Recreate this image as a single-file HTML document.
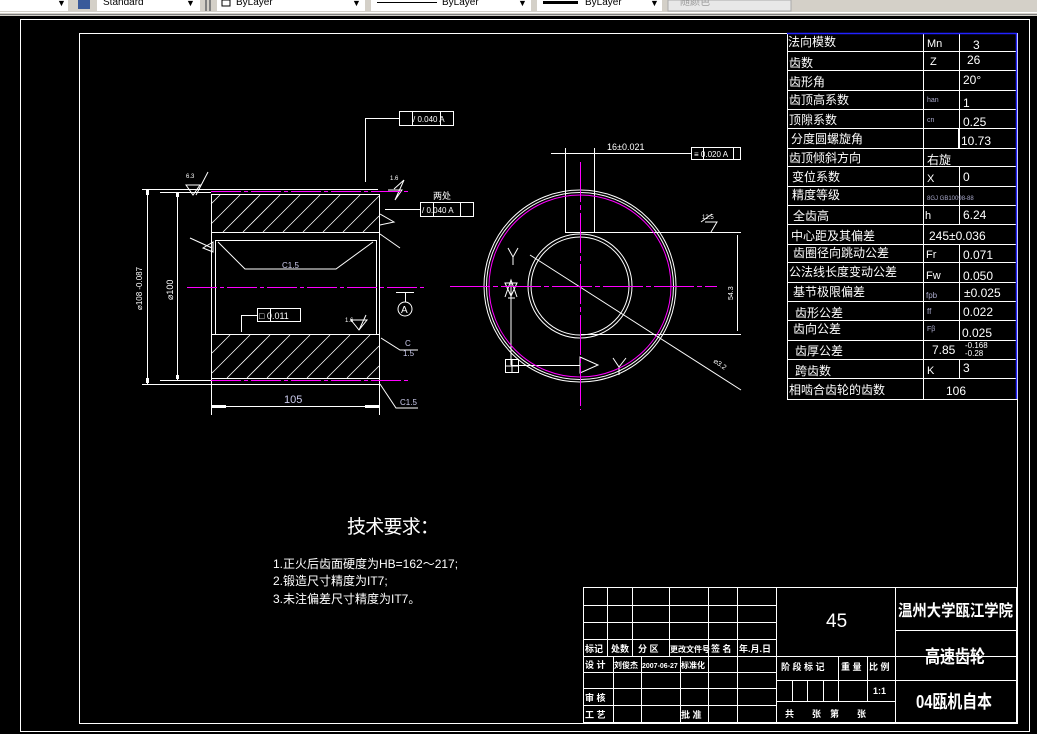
<!DOCTYPE html>
<html><head><meta charset="utf-8">
<style>
html,body{margin:0;padding:0;background:#000;width:1037px;height:734px;overflow:hidden}
svg{display:block}
text{font-family:"Liberation Sans","Noto Sans CJK SC","WenQuanYi Zen Hei",sans-serif;fill:#fff}
.s{font-family:"Noto Sans CJK SC","WenQuanYi Zen Hei",sans-serif}
</style></head><body>
<svg width="1037" height="734" viewBox="0 0 1037 734" xmlns="http://www.w3.org/2000/svg">
<rect width="1037" height="734" fill="#000"/>
<!-- toolbar -->
<rect x="0" y="0" width="1037" height="16" fill="#d4d0c8"/>
<rect x="0" y="12" width="1037" height="1" fill="#fff"/>
<rect x="0" y="14" width="1037" height="1" fill="#808080"/>
<g font-size="10">
<rect x="0" y="0" width="68" height="11" fill="#fff"/><text x="57" y="6" font-size="9" style="fill:#000">▼</text>
<rect x="78" y="0" width="12" height="9" fill="#3a5a9a"/>
<rect x="97" y="0" width="103" height="11" fill="#fff"/><text x="103" y="5" style="fill:#000">Standard</text><text x="186" y="6" font-size="9" style="fill:#000">▼</text>
<rect x="205" y="0" width="2" height="11" fill="#808080"/><rect x="209" y="0" width="2" height="11" fill="#808080"/>
<rect x="217" y="0" width="148" height="11" fill="#fff"/><rect x="222" y="0" width="8" height="6" fill="none" stroke="#000"/><text x="236" y="5" style="fill:#000">ByLayer</text><text x="352" y="6" font-size="9" style="fill:#000">▼</text>
<rect x="371" y="0" width="160" height="11" fill="#fff"/><rect x="377" y="2" width="60" height="1" fill="#000"/><text x="442" y="5" style="fill:#000">ByLayer</text><text x="518" y="6" font-size="9" style="fill:#000">▼</text>
<rect x="537" y="0" width="125" height="11" fill="#fff"/><rect x="543" y="1" width="35" height="3" fill="#000"/><text x="585" y="5" style="fill:#000">ByLayer</text><text x="650" y="6" font-size="9" style="fill:#000">▼</text>
<rect x="668" y="0" width="123" height="11" fill="#e8e8e8" stroke="#aaa"/><text x="680" y="5" class="s" style="fill:#999">随颜色</text>
</g>
<!-- frames -->
<rect x="20.5" y="19.5" width="1009" height="712" fill="none" stroke="#fff"/>
<rect x="79.5" y="33.5" width="938" height="690" fill="none" stroke="#fff"/>

<!-- parameter table -->
<g stroke="#fff" fill="none">
<path d="M787.5 33V399M923.5 33V399M1016.5 33V399M787 399.5H1017"/>
<path d="M787 51.5H1017M787 70.5H1017M787 90.5H1017M787 109.5H1017M787 128.5H1017M787 148.5H1017M787 166.5H1017M787 186.5H1017M787 205.5H1017M787 224.5H1017M787 244.5H1017M787 262.5H1017M787 282.5H1017M787 301.5H1017M787 320.5H1017M787 340.5H1017M787 359.5H1017M787 378.5H1017"/>
<path d="M959.5 33V148M958.5 128V148M959.5 166V205M959.5 205V224M959.5 244V340M959.5 359V378"/>
</g>
<path d="M787 33.5H1016.5V399" stroke="#22f" fill="none" stroke-width="1.5"/>
<g font-size="12" class="s">
<text x="788" y="46">法向模数</text><text x="789" y="67">齿数</text><text x="789" y="86">齿形角</text><text x="789" y="104">齿顶高系数</text><text x="789" y="124">顶隙系数</text><text x="791" y="143">分度圆螺旋角</text><text x="789" y="162">齿顶倾斜方向</text><text x="792" y="181">变位系数</text><text x="792" y="199">精度等级</text><text x="793" y="220">全齿高</text><text x="791" y="240">中心距及其偏差</text><text x="793" y="257">齿圈径向跳动公差</text><text x="789" y="276">公法线长度变动公差</text><text x="793" y="296">基节极限偏差</text><text x="795" y="317">齿形公差</text><text x="793" y="333">齿向公差</text><text x="795" y="355">齿厚公差</text><text x="795" y="375">跨齿数</text><text x="789" y="394">相啮合齿轮的齿数</text>
<text x="927" y="164">右旋</text>
</g>
<g font-size="12" font-family="Liberation Mono">
<text x="927" y="47" font-size="11">Mn</text><text x="973" y="49">3</text>
<text x="930" y="65" font-size="11">Z</text><text x="967" y="64">26</text>
<text x="963" y="84">20°</text>
<text x="927" y="102" font-size="7" style="fill:#aac">han</text><text x="963" y="107">1</text>
<text x="927" y="122" font-size="7" style="fill:#aac">cn</text><text x="963" y="126">0.25</text>
<text x="961" y="145">10.73</text>
<text x="927" y="182" font-size="11">X</text><text x="963" y="181">0</text>
<text x="927" y="200" font-size="6" style="fill:#aac">8GJ GB10098-88</text>
<text x="925" y="219" font-size="11">h</text><text x="963" y="219">6.24</text>
<text x="929" y="240">245±0.036</text>
<text x="926" y="258" font-size="11">Fr</text><text x="963" y="259">0.071</text>
<text x="926" y="279" font-size="11">Fw</text><text x="963" y="280">0.050</text>
<text x="926" y="298" font-size="8" style="fill:#aac">fpb</text><text x="964" y="297">±0.025</text>
<text x="927" y="314" font-size="8" style="fill:#aac">ff</text><text x="963" y="316">0.022</text>
<text x="927" y="331" font-size="7" style="fill:#aac">Fβ</text><text x="962" y="337">0.025</text>
<text x="932" y="354">7.85</text><text x="965" y="348" font-size="8">-0.168</text><text x="965" y="356" font-size="8">-0.28</text>
<text x="927" y="374" font-size="11">K</text><text x="963" y="372">3</text>
<text x="946" y="395">106</text>
</g>

<!-- left view -->
<g stroke="#fff" fill="none" stroke-width="1">
<path d="M142 189.5H378M142 384.5H380"/>
<rect x="211.5" y="194.5" width="168" height="38"/>
<rect x="211.5" y="334.5" width="168" height="44"/>
<path d="M211.5 194V384M379.5 194V384"/>
<rect x="215.5" y="240.5" width="161" height="94"/>
<path d="M218 242L245 269H336L373 242"/>
<path d="M147.5 189V384M177.5 192V380M160 192.5H211M160 380.5H211"/>
<path d="M211.5 384V415M379.5 384V415M211 406.5H380"/>
<path d="M365.5 118V182M365 118.5H399"/>
<rect x="399.5" y="111.5" width="54" height="14"/><path d="M412.5 111V125M440.5 111V125"/>
<path d="M385 209.5H420"/>
<rect x="420.5" y="202.5" width="53" height="14"/><path d="M433.5 202V216M460.5 202V216"/>
<rect x="257.5" y="308.5" width="43" height="13"/><path d="M270.5 308V321M241.5 315.5H257M241.5 315V332"/>
<circle cx="405" cy="309" r="7"/><path d="M396 292.5H414M405.5 292V302"/>
<path d="M381 338L400 350H418M380 384L396 408H418"/>
<path d="M186 185H200L193 195ZM196 195L208 172M394 189L404 180M388 190H402L395 200L404 180"/>
<path d="M380 214L394 222L380 225M380 234L400 248"/>
<path d="M359 330L351 320H367ZM359 330L366 315"/>
<path d="M213 242L203 248L213 252ZM190 238L212 248"/>
</g>
<g fill="#fff" stroke="none">
<g stroke="#fff" stroke-width="0.8">
<path d="M220 195L211 204M240 195L211 224M260 195L223 232M280 195L243 232M300 195L263 232M320 195L283 232M340 195L303 232M360 195L323 232M379 196L343 232M379 216L363 232"/>
<path d="M230 335L212 353M250 335L212 373M270 335L227 378M290 335L247 378M310 335L267 378M330 335L287 378M350 335L307 378M370 335L327 378M379 346L347 378M379 366L367 378"/>
</g>
<rect x="146" y="190" width="3" height="5"/><rect x="146" y="378" width="3" height="5"/><rect x="176" y="193" width="3" height="4"/><rect x="176" y="375" width="3" height="4"/>
<rect x="212" y="405" width="14" height="3"/><rect x="365" y="405" width="14" height="3"/>
</g>
<g stroke="#f0f" stroke-width="1" fill="none">
<path d="M211 191.5H408M211 380.5H408" stroke-dasharray="30 3 4 3"/>
<path d="M187 287.5H426" stroke-dasharray="30 3 4 3"/>
</g>
<g font-size="8" font-family="Liberation Mono">
<text x="282" y="268" style="fill:#cce">C1.5</text>
<text x="413" y="122">/ 0.040 A</text>
<text x="433" y="199" class="s" font-size="9">两处</text>
<text x="422" y="213">/ 0.040 A</text>
<text x="259" y="319" font-size="9">□ 0.011</text>
<text x="401" y="313" font-size="10">A</text>
<text x="405" y="346" style="fill:#cce">C</text><text x="403" y="356" style="fill:#cce">1.5</text>
<text x="400" y="405" style="fill:#cce">C1.5</text>
<text x="284" y="403" font-size="11" style="fill:#cce">105</text>
<text transform="translate(173,300) rotate(-90)" font-size="9">⌀100</text>
<text transform="translate(142,310) rotate(-90)" font-size="8">⌀108 -0.087</text>
<text x="186" y="178" font-size="6">6.3</text><text x="390" y="180" font-size="6">1.6</text><text x="345" y="322" font-size="6">1.6</text>
</g>

<!-- right view -->
<g fill="none" stroke="#fff">
<circle cx="580" cy="286" r="96"/><circle cx="580" cy="286" r="93.5"/>
<circle cx="580" cy="286" r="52"/><circle cx="580" cy="286" r="49"/>
<path d="M565.5 148V232M594.5 148V232M565 232.5H741M580 334.5H741M737.5 235V331"/>
<path d="M551 153.5H691"/><rect x="691.5" y="147.5" width="49" height="12"/><path d="M703.5 147V159M733.5 147V159"/>
<path d="M530 255L741 390"/>
<path d="M511 283V365M511 365.5H580M580 357L598 365L580 373Z"/>
<rect x="505.5" y="359.5" width="13" height="13"/><path d="M512 359V373M505 366H519"/>
<path d="M505 283L511 296L517 283ZM508 298H515M505 297L511 280L517 297"/>
<path d="M508 248L513 257L518 248M513 257V265"/>
<path d="M613 358L619 367L626 358M619 367V375"/>
<path d="M701 222L712 214M705 222H717L711 232"/>
</g>
<circle cx="580" cy="286" r="91" fill="none" stroke="#f0f"/>
<g stroke="#f0f" fill="none">
<path d="M450 286.5H717" stroke-dasharray="40 3 5 3"/>
<path d="M580.5 162V410" stroke-dasharray="40 3 5 3"/>
</g>
<g font-size="8" font-family="Liberation Mono">
<text x="607" y="150" font-size="9">16±0.021</text>
<text x="694" y="157">≡ 0.020 A</text>
<text x="702" y="219" font-size="6">12.5</text>
<text transform="translate(733,300) rotate(-90)" font-size="7">54.3</text>
<text transform="translate(713,362) rotate(35)" font-size="7">⌀3.2</text>
</g>

<!-- tech requirements -->
<text x="347" y="533" class="s" font-size="19" textLength="92">技术要求：</text>
<g class="s" font-size="12">
<text x="273" y="568">1.正火后齿面硬度为HB=162～217;</text>
<text x="273" y="585">2.锻造尺寸精度为IT7;</text>
<text x="273" y="603">3.未注偏差尺寸精度为IT7。</text>
</g>

<!-- title block -->
<g stroke="#fff" fill="none">
<rect x="583.5" y="587.5" width="433" height="135"/>
<path d="M583 605.5H776M583 622.5H776M583 639.5H776M583 656.5H1016M583 672.5H776M583 688.5H776M583 705.5H776"/>
<path d="M607.5 587V656M632.5 587V656M669.5 587V656M708.5 587V723M737.5 587V723M776.5 587V723"/>
<path d="M613.5 656V723M641.5 656V723M680.5 656V723"/>
<path d="M895.5 587V723M895 630.5H1016M776 680.5H1016M776 701.5H895"/>
<path d="M838.5 656V701M867.5 656V701M792.5 680V701M807.5 680V701M823.5 680V701"/>
</g>
<g class="s" font-size="9" font-weight="bold">
<text x="585" y="652">标记</text><text x="611" y="652">处数</text><text x="638" y="652">分 区</text><text x="670" y="652" font-size="8">更改文件号</text><text x="711" y="652">签 名</text><text x="739" y="652">年.月.日</text>
<text x="585" y="668">设 计</text><text x="614" y="668" font-size="8">刘俊杰</text><text x="642" y="668" font-size="7">2007-06-27</text><text x="681" y="668" font-size="8">标准化</text>
<text x="585" y="701">审 核</text><text x="585" y="718">工 艺</text><text x="681" y="718">批 准</text>
<text x="781" y="670">阶 段 标 记</text><text x="841" y="670">重 量</text><text x="869" y="670">比 例</text>
<text x="873" y="694" font-family="Liberation Serif">1:1</text>
<text x="785" y="717">共　　张　第　　张</text>
</g>
<text x="826" y="627" font-size="19" font-family="Liberation Serif">45</text>
<g class="s" font-weight="bold">
<text x="898" y="616" font-size="16" textLength="115" lengthAdjust="spacingAndGlyphs">温州大学瓯江学院</text>
<text x="925" y="663" font-size="18" textLength="60" lengthAdjust="spacingAndGlyphs">高速齿轮</text>
<text x="916" y="708" font-size="18" textLength="76" lengthAdjust="spacingAndGlyphs">04瓯机自本</text>
</g>
</svg>
</body></html>
